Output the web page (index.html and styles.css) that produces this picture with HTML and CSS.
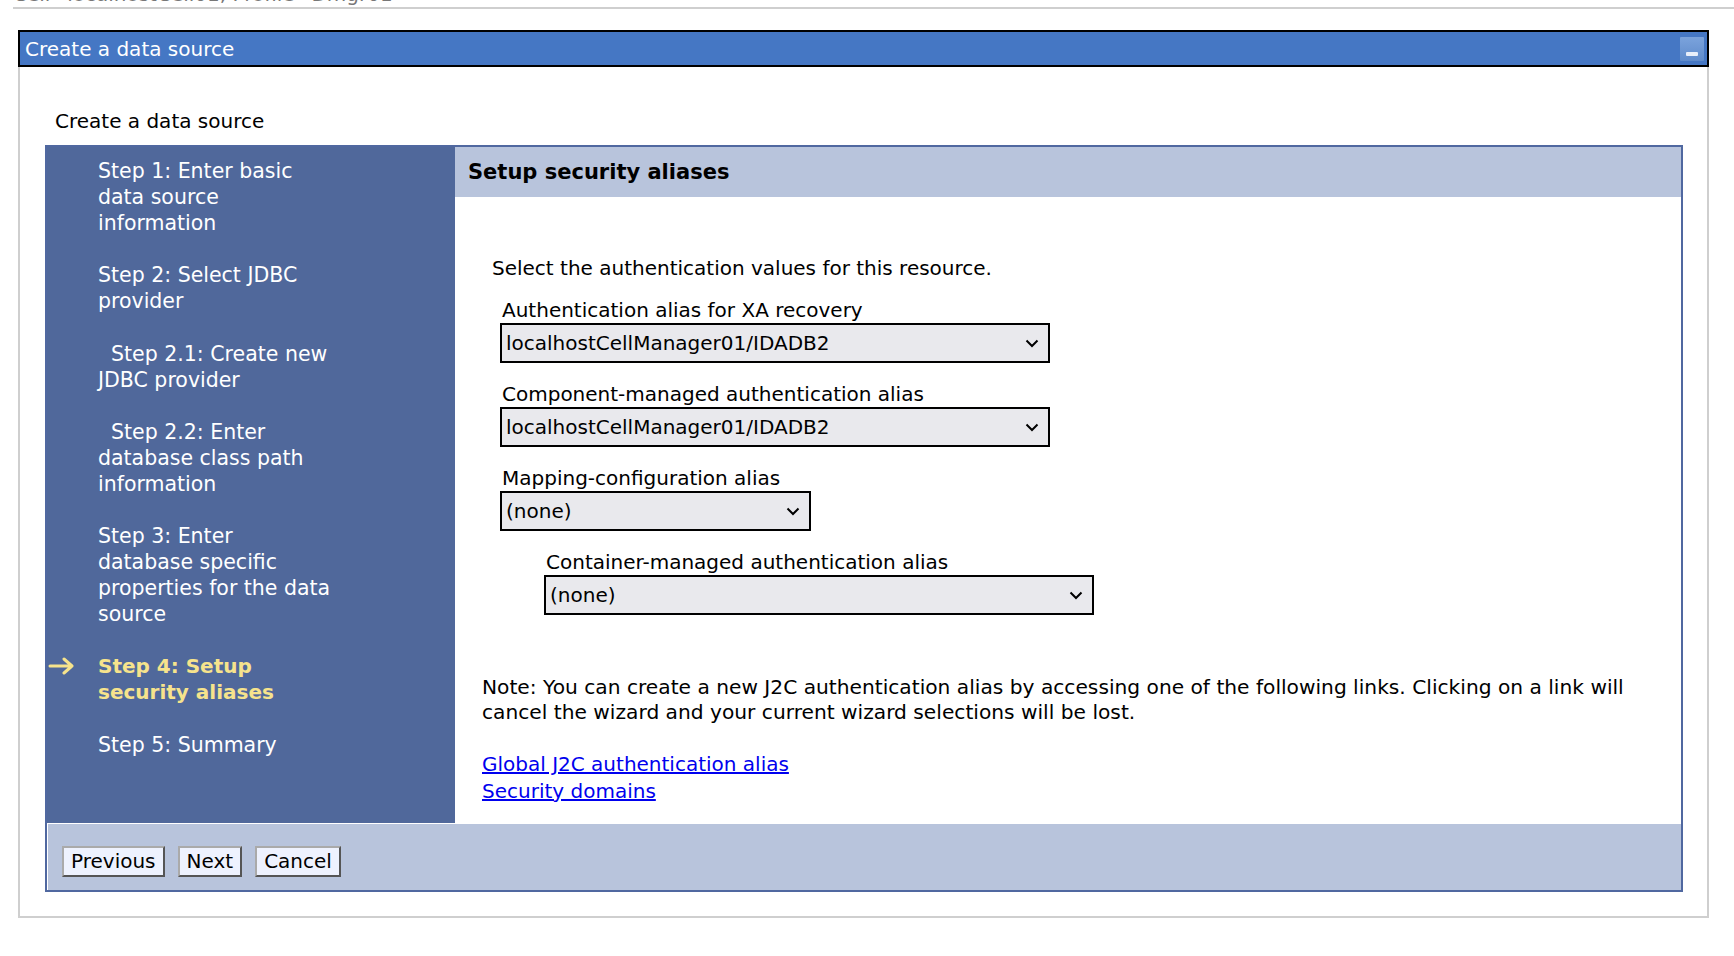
FILE: index.html
```html
<!DOCTYPE html>
<html lang="en">
<head>
<meta charset="utf-8">
<title>Create a data source</title>
<link rel="stylesheet" href="styles.css">
</head>
<body>
<div class="crumb"><span>Cell=localhostCell01, Profile=Dmgr01</span></div>

<div class="portlet">
  <div class="titlebar">
    <span class="title">Create a data source</span>
    <span class="minbtn"><span class="dash"></span></span>
  </div>
  <div class="portlet-body">
    <div class="page-heading">Create a data source</div>

    <div class="wizard">
      <nav class="steps">
        <div class="step"><span class="marker"></span><span class="label">Step 1: Enter basic<br>data source<br>information</span></div>
        <div class="step"><span class="marker"></span><span class="label">Step 2: Select JDBC<br>provider</span></div>
        <div class="step"><span class="marker"></span><span class="label">&nbsp;&nbsp;Step 2.1: Create new<br>JDBC provider</span></div>
        <div class="step"><span class="marker"></span><span class="label">&nbsp;&nbsp;Step 2.2: Enter<br>database class path<br>information</span></div>
        <div class="step"><span class="marker"></span><span class="label">Step 3: Enter<br>database specific<br>properties for the data<br>source</span></div>
        <div class="step current"><span class="marker"><svg class="arrow" width="28" height="18" viewBox="0 0 28 18"><path d="M2 9 H24 M16 2 L24 9 L16 16" fill="none" stroke="#f6e38c" stroke-width="3" stroke-linecap="round" stroke-linejoin="round"/></svg></span><span class="label">Step 4: Setup<br>security aliases</span></div>
        <div class="step"><span class="marker"></span><span class="label">Step 5: Summary</span></div>
      </nav>

      <main class="main">
        <div class="main-header">Setup security aliases</div>
        <div class="main-content">
          <p class="intro">Select the authentication values for this resource.</p>

          <div class="field">
            <div class="field-label">Authentication alias for XA recovery</div>
            <div class="select wide"><span>localhostCellManager01/IDADB2</span><svg class="chev" width="14" height="9" viewBox="0 0 14 9"><path d="M1.5 1.5 L7 7 L12.5 1.5" fill="none" stroke="#000" stroke-width="2"/></svg></div>
          </div>

          <div class="field">
            <div class="field-label">Component-managed authentication alias</div>
            <div class="select wide"><span>localhostCellManager01/IDADB2</span><svg class="chev" width="14" height="9" viewBox="0 0 14 9"><path d="M1.5 1.5 L7 7 L12.5 1.5" fill="none" stroke="#000" stroke-width="2"/></svg></div>
          </div>

          <div class="field">
            <div class="field-label">Mapping-configuration alias</div>
            <div class="select narrow"><span>(none)</span><svg class="chev" width="14" height="9" viewBox="0 0 14 9"><path d="M1.5 1.5 L7 7 L12.5 1.5" fill="none" stroke="#000" stroke-width="2"/></svg></div>
          </div>

          <div class="field indented">
            <div class="field-label">Container-managed authentication alias</div>
            <div class="select wide"><span>(none)</span><svg class="chev" width="14" height="9" viewBox="0 0 14 9"><path d="M1.5 1.5 L7 7 L12.5 1.5" fill="none" stroke="#000" stroke-width="2"/></svg></div>
          </div>

          <p class="note">Note: You can create a new J2C authentication alias by accessing one of the following links. Clicking on a link will cancel the wizard and your current wizard selections will be lost.</p>

          <div class="links">
            <a href="#">Global J2C authentication alias</a><br>
            <a href="#">Security domains</a>
          </div>
        </div>
      </main>

      <div class="buttonbar">
        <button class="btn" type="button">Previous</button>
        <button class="btn" type="button">Next</button>
        <button class="btn" type="button">Cancel</button>
      </div>
    </div>
  </div>
</div>
</body>
</html>
```

FILE: styles.css
```css
html, body {
  margin: 0;
  padding: 0;
  background: #ffffff;
}

body {
  font-family: "DejaVu Sans", Verdana, sans-serif;
  font-size: 20px;
  color: #000;
}

.crumb {
  margin-left: 13px;
  height: 7px;
  overflow: hidden;
  border-bottom: 2px solid #cfcfcf;
  color: #777;
}

.crumb span {
  display: block;
  line-height: 20px;
  margin-top: -16px;
  white-space: nowrap;
}

.portlet {
  margin: 21px 25px 0 18px;
}

.titlebar {
  box-sizing: border-box;
  height: 37px;
  background: #4577c4;
  border: 2px solid #000;
  display: flex;
  align-items: center;
  justify-content: space-between;
  padding: 0 3px 0 5px;
  color: #fff;
}

.title {
  line-height: 26px;
}

.minbtn {
  width: 24px;
  height: 24px;
  background: linear-gradient(#7ba3dc, #5f8bcb);
  border-radius: 1px;
  display: flex;
  align-items: flex-end;
  justify-content: center;
}

.minbtn .dash {
  width: 12px;
  height: 4px;
  background: #e8effa;
  margin-bottom: 5px;
  border-radius: 1px;
}

.portlet-body {
  border: 2px solid #cfcfcf;
  border-top: none;
  padding: 41px 0 24px 25px;
}

.page-heading {
  padding-left: 10px;
  line-height: 26px;
}

.wizard {
  margin-top: 11px;
  width: 1638px;
  box-sizing: border-box;
  border: 2px solid #5068a0;
  display: grid;
  grid-template-columns: 408px 1fr;
  grid-template-rows: 676px auto;
}

.steps {
  background: #50689b;
  color: #fff;
  padding-top: 11px;
  font-size: 20.5px;
}

.step {
  display: flex;
  line-height: 26px;
  margin-bottom: 26.3px;
}

.marker {
  width: 51px;
  flex: none;
  display: flex;
  align-items: flex-start;
}

.arrow {
  margin-top: 4px;
  margin-left: 1px;
}

.step.current .label {
  color: #f6e38c;
  font-weight: bold;
  font-size: 20px;
}

.main {
  background: #fff;
  display: flex;
  flex-direction: column;
}

.main-header {
  height: 50px;
  background: #b8c4dc;
  font-weight: bold;
  font-size: 21px;
  padding-left: 13px;
  display: flex;
  align-items: center;
}

.main-content {
  padding: 58px 0 0 27px;
}

.intro {
  margin: 0 0 16px 10px;
  line-height: 26px;
}

.field {
  margin-left: 18px;
  margin-bottom: 18px;
}

.field.indented {
  margin-left: 62px;
}

.field-label {
  line-height: 26px;
  padding-left: 2px;
}

.select {
  box-sizing: border-box;
  height: 40px;
  border: 2px solid #000;
  background: #e9e9ed;
  display: flex;
  align-items: center;
  justify-content: space-between;
  padding: 0 9px 0 4px;
}

.select.wide {
  width: 550px;
}

.select.narrow {
  width: 311px;
}

.chev {
  flex: none;
}

.note {
  margin: 60px 0 0 0;
  line-height: 25px;
  font-size: 20.2px;
  max-width: 1170px;
}

.links {
  margin-top: 26px;
  line-height: 27px;
}

.links a {
  color: #0000ee;
  text-decoration: underline;
}

.buttonbar {
  grid-column: 1 / 3;
  background: #b8c4dc;
  border-top: 1px solid #fff;
  border-left: 1px solid #fff;
  height: 67px;
  padding: 22px 0 0 14px;
  box-sizing: border-box;
  display: flex;
  align-items: flex-start;
  gap: 13px;
}

.btn {
  font-family: "DejaVu Sans", Verdana, sans-serif;
  font-size: 20px;
  height: 31px;
  line-height: 25px;
  padding: 0 7px;
  background: #eef2fe;
  color: #000;
  border: 2px solid;
  border-color: #aaaaaa #555555 #555555 #aaaaaa;
  border-radius: 0;
}
```
